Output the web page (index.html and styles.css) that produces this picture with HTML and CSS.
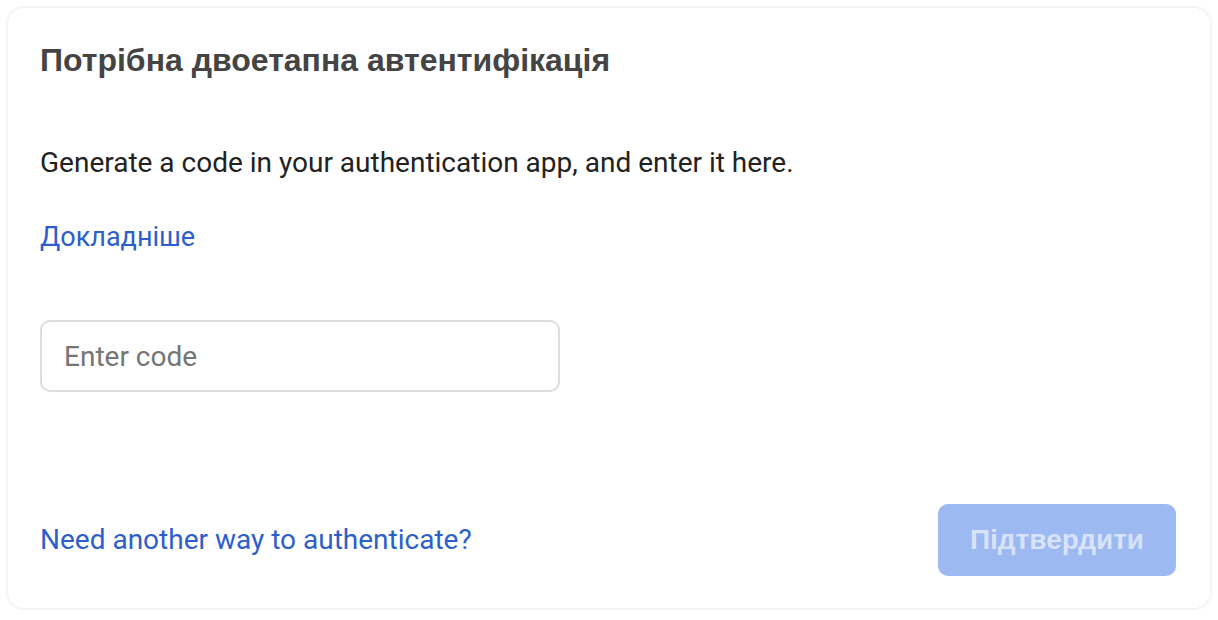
FILE: index.html
```html
<!DOCTYPE html>
<html lang="uk">
<head>
  <meta charset="UTF-8" />
  <title>Двоетапна автентифікація</title>
  <link rel="stylesheet" href="styles.css">
</head>
<body>

  <div class="card">
    <h2 class="card-title">Потрібна двоетапна автентифікація</h2>
    <p class="card-text">Generate a code in your authentication app, and enter it here.</p>
    <a class="link more-link" href="#">Докладніше</a>
    <input class="code-input" type="text" placeholder="Enter code" />

    <div class="card-footer">
      <a class="link" href="#">Need another way to authenticate?</a>
      <button class="submit-btn" disabled>Підтвердити</button>
    </div>
  </div>

</body>
</html>
```

FILE: styles.css
```css
body {
  margin: 0;
  padding: 8px;
  background: #fff;
  font-family: Roboto, 'Noto Sans', sans-serif;
}
.card {
  box-sizing: border-box;
  height: 600px;
  display: flex;
  flex-direction: column;
  align-items: flex-start;
  padding: 32px 34px 32px 32px;
  background: #fff;
  border-radius: 16px;
  box-shadow: 0 0 4px rgba(0, 0, 0, 0.12);
}
.card-title {
  margin: 0;
  font-family: 'Liberation Sans', Arial, sans-serif;
  font-size: 32px;
  line-height: 40px;
  font-weight: bold;
  color: #444;
}
.card-text {
  margin: 67px 0 0;
  font-size: 28px;
  line-height: 32px;
  color: #222;
}
.link {
  color: #2d5fcc;
  text-decoration: none;
  font-size: 28px;
  line-height: 32px;
}
.more-link {
  margin-top: 42px;
  font-size: 27px;
}
.code-input {
  box-sizing: border-box;
  margin-top: 67px;
  width: 520px;
  height: 72px;
  padding: 0 22px;
  border: 2px solid #ddd;
  border-radius: 10px;
  font-family: Roboto, sans-serif;
  font-size: 28px;
  color: #222;
  outline: none;
}
.code-input::placeholder {
  color: #757575;
}
.card-footer {
  margin-top: auto;
  width: 100%;
  display: flex;
  justify-content: space-between;
  align-items: center;
}
.submit-btn {
  width: 238px;
  height: 72px;
  border: none;
  border-radius: 10px;
  background: #9cb9f2;
  color: #d9e3f8;
  font-family: 'Liberation Sans', Arial, sans-serif;
  font-size: 28px;
  font-weight: bold;
}
```
